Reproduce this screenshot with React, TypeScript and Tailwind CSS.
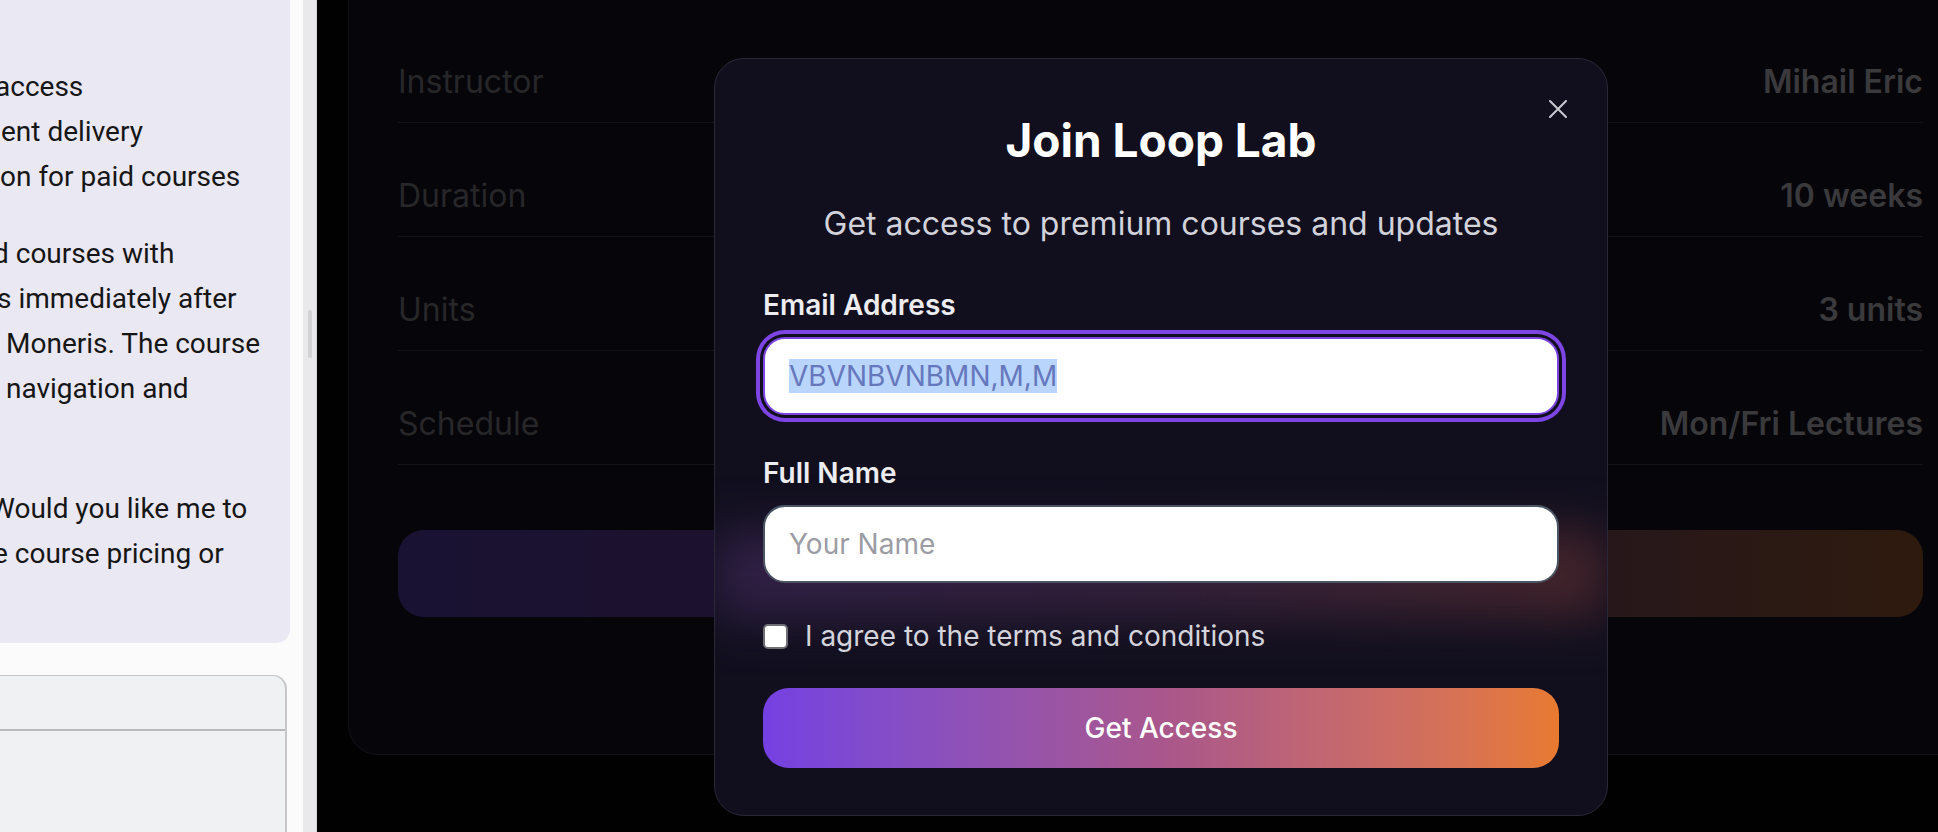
import React from 'react';

const rows = [
  { label: 'Instructor', value: 'Mihail Eric' },
  { label: 'Duration', value: '10 weeks' },
  { label: 'Units', value: '3 units' },
  { label: 'Schedule', value: 'Mon/Fri Lectures' },
];

// visible right-hand part of the chat bubble lines (the rest is scrolled out of view)
const bubbleLines = [
  { text: '\u00a0', cls: '' },
  { text: 'access', cls: '-ml-[5px]' },
  { text: 'ent delivery', cls: 'ml-[1px]' },
  { text: 'on for paid courses', cls: '' },
  { text: 'd courses with', cls: '-ml-[7px] mt-[32px]' },
  { text: 's immediately after', cls: '-ml-[3px]' },
  { text: 'Moneris. The course', cls: 'ml-[6px]' },
  { text: 'navigation and', cls: 'ml-[6px]' },
  { text: '\u00a0', cls: '' },
  { text: 'Would you like me to', cls: '-ml-[10px] mt-[30px]' },
  { text: 'e course pricing or', cls: '-ml-[7px]' },
  { text: '\u00a0', cls: '' },
];

const ChatPane: React.FC = () => (
  <div className="flex h-full w-[317px] shrink-0">
    <div className="flex w-[303px] flex-col bg-[#fbfbfb] font-[Roboto,sans-serif]">
      <div className="mr-[13px] overflow-hidden whitespace-nowrap rounded-br-[14px] bg-[#eae8f3] pt-[19px] pb-[22px] text-[28px] leading-[45px] text-[#161616]">
        {bubbleLines.map((l, i) => (
          <div key={i} className={l.cls}>{l.text}</div>
        ))}
      </div>
      <div className="mt-[32px] mr-[16px] flex-1 rounded-tr-[14px] border-t border-r-2 border-[#c6c6c8] bg-[#f0f1f3]">
        <div className="h-[55px] border-b-2 border-[#b9b9bb]" />
      </div>
    </div>
    <div className="w-[13px] bg-[#e9e9eb] pt-[310px] pl-[5px]">
      <div className="h-[48px] w-[4px] rounded-full bg-[#d2d2d4]" />
    </div>
    <div className="w-px bg-[#d4d4d6]" />
  </div>
);

const JoinModal: React.FC = () => (
  <div className="absolute left-[397px] top-[58px] w-[894px] overflow-hidden rounded-[30px] border border-[#2a2837] bg-[#110f1e] px-[48px] pt-[53px] pb-[47px]">
    <div className="pointer-events-none absolute left-0 right-0 top-[472px] h-[87px] bg-linear-to-r from-[#302046] via-[#33203a] to-[#44242a] blur-[24px]" />
    <button className="absolute right-[40px] top-[41px] z-10">
      <svg width="18" height="18" viewBox="0 0 18 18" fill="none" stroke="#c9c9d2" strokeWidth="2" strokeLinecap="round">
        <path d="M1 1L17 17M17 1L1 17" />
      </svg>
    </button>
    <div className="relative">
      <h2 className="text-center text-[46px] leading-[56px] font-bold text-white">Join Loop Lab</h2>
      <p className="mt-[36px] text-center text-[32px] leading-[40px] text-[#d2d2da]">
        Get access to premium courses and updates
      </p>

      <label className="mt-[43px] block text-[28px] leading-[36px] font-semibold text-[#ececf1]">Email Address</label>
      <div className="mt-[14px] flex h-[78px] items-center rounded-[22px] border-2 border-[#7c45e4] bg-white pl-[24px] ring-4 ring-[#7c45e4] ring-offset-3 ring-offset-[#110f1e]">
        <span className="inline-block h-[34px] bg-[#b9d5fb] text-[28px] leading-[34px] text-[#6678bd]">VBVNBVNBMN,M,M</span>
      </div>

      <label className="mt-[40px] block text-[28px] leading-[36px] font-semibold text-[#ececf1]">Full Name</label>
      <input
        type="text"
        placeholder="Your Name"
        className="mt-[14px] block h-[78px] w-full rounded-[22px] border-2 border-[#4b5563] bg-white px-[24px] text-[28px] text-gray-900 outline-none placeholder:text-[#9c9ca5]"
      />

      <label className="mt-[35px] flex h-[36px] items-center gap-[17px] text-[28px] leading-[36px] text-[#d4d4dc]">
        <input type="checkbox" className="h-[25px] w-[25px] appearance-none rounded-[5px] border-2 border-[#6e6e74] bg-white" />
        I agree to the terms and conditions
      </label>

      <button className="mt-[34px] block h-[80px] w-full rounded-[26px] bg-linear-to-r from-[#7540e2] via-[#a9568c] to-[#e87a30] text-[28px] font-medium text-white">
        Get Access
      </button>
    </div>
  </div>
);

export default function App() {
  return (
    <div className="flex h-screen w-screen overflow-hidden font-[Inter,sans-serif]">
      <ChatPane />
      <div className="relative flex-1 overflow-hidden bg-[#010101] pl-[31px]">
        <div className="h-[755px] w-[1625px] rounded-bl-[30px] border border-t-0 border-[#111015] bg-[#060509] px-[49px] pt-[9px]">
          {rows.map(r => (
            <div key={r.label} className="flex items-center justify-between border-b border-[#131217] pt-[50px] pb-[17px] text-[32px] leading-[46px]">
              <span className="text-[#27272a]">{r.label}</span>
              <span className="font-semibold text-[#3a3a3d]">{r.value}</span>
            </div>
          ))}
          <div className="mt-[65px] h-[87px] rounded-[26px] bg-linear-to-r from-[#1a1233] via-[#1f1128] to-[#2e1a0d]" />
        </div>
        <JoinModal />
      </div>
    </div>
  );
}
